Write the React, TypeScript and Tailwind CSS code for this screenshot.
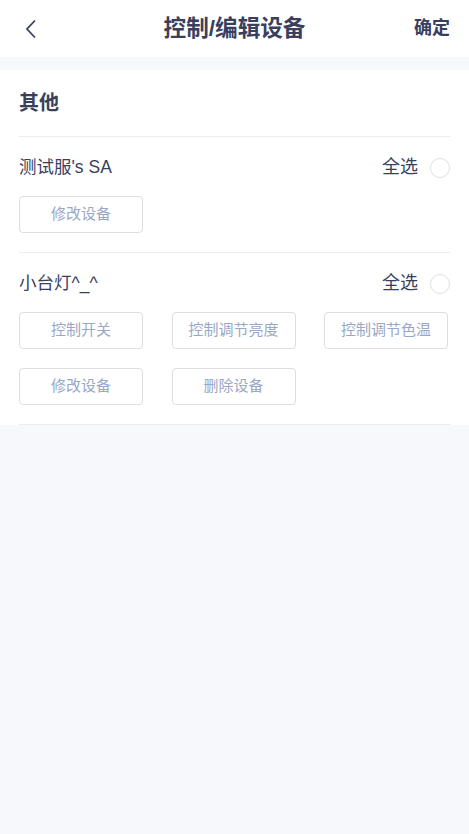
const font = { fontFamily: '"Liberation Sans", "Noto Sans CJK SC", sans-serif' };

interface Group {
    name: string,
    actions: string[],
}

const groups: Group[] = [
    { name: "测试服's SA", actions: ['修改设备'] },
    { name: '小台灯^_^', actions: ['控制开关', '控制调节亮度', '控制调节色温', '修改设备', '删除设备'] },
];

const DeviceGroup = ({ name, actions }: Group) => (
    <div className="border-t border-[#ececef] pb-[19px]">
        <div className="h-[59px] flex items-center justify-between pt-[2px]">
            <span className="text-[17.5px] text-[#3b3f5e]">{name}</span>
            <div className="flex items-center gap-[12px]">
                <span className="text-[18px] text-[#3b3f5e]">全选</span>
                <span className="w-[20px] h-[20px] rounded-full border border-[#dedfe3]"></span>
            </div>
        </div>
        <div className="grid grid-cols-[124px_124px_124px] gap-x-[28.5px] gap-y-[19px]">
            {actions.map((a, idx) => (
                <div key={idx} className="h-[37px] rounded-[4px] border border-[#dcdee3] flex items-center justify-center text-[15px] text-[#9aa7c6]">
                    {a}
                </div>
            ))}
        </div>
    </div>
);

export default function App() {
    return (
        <div style={font} className="w-[469px] h-[834px] bg-[#f7f8fc]">
            <div className="h-[57px] bg-white flex items-center justify-between px-[19px] relative">
                <svg width="20" height="20" viewBox="0 0 20 20" className="ml-[2px]">
                    <path d="M14 1.5 L6 10 L14 18.5" fill="none" stroke="#3b3f5e" strokeWidth="1.8" />
                </svg>
                <span className="absolute left-0 right-0 text-center text-[22.6px] font-bold text-[#3b3f5e] pointer-events-none">控制/编辑设备</span>
                <span className="text-[18px] font-bold text-[#3b3f5e]">确定</span>
            </div>
            <div className="mt-[13px] bg-white px-[19px]">
                <div className="h-[66px] flex items-center">
                    <span className="text-[20px] font-bold text-[#3b3f5e]">其他</span>
                </div>
                {groups.map((g, idx) => (
                    <DeviceGroup key={idx} {...g} />
                ))}
                <div className="border-t border-[#ececef]"></div>
            </div>
        </div>
    );
}
